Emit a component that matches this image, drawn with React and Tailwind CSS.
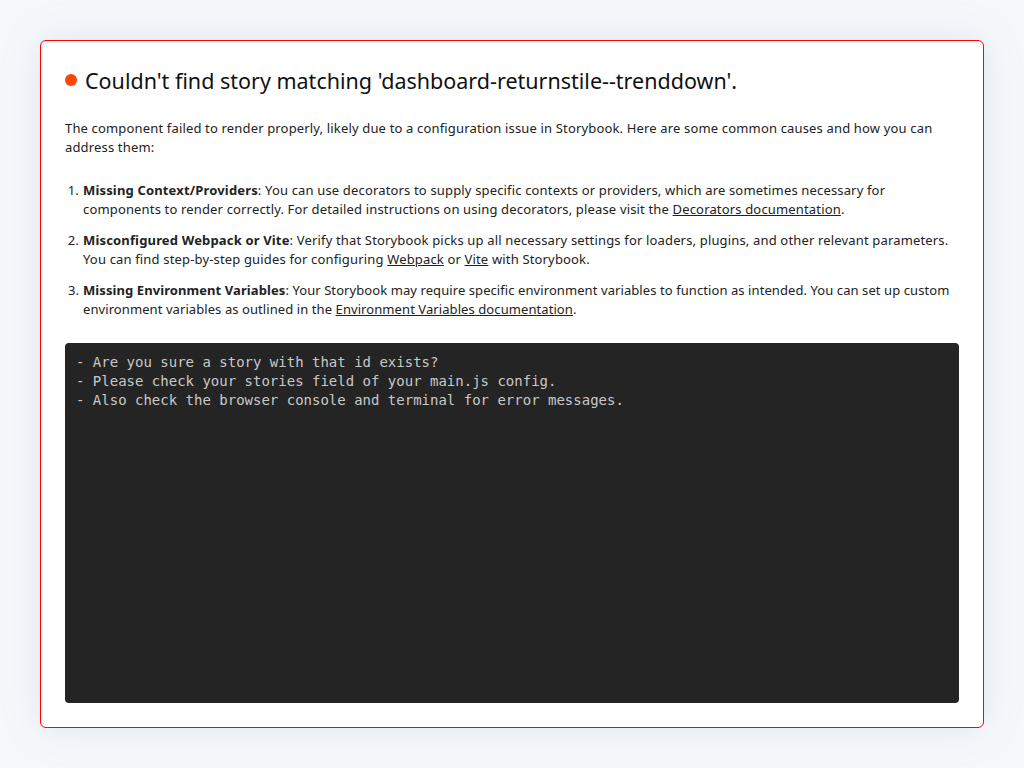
export default function App() {
  const body = { fontFamily: '"Noto Sans", "Open Sans", sans-serif' }
  return (
    <div className="h-screen w-full bg-[#f6f9fc] p-10 flex" style={body}>
      <div className="flex-1 flex flex-col gap-6 bg-white border border-[#ff0000] rounded-md p-6 shadow-[0_0_40px_rgba(120,135,155,0.18)]">
        <div className="flex items-center gap-2 h-[30px]">
          <span className="w-3 h-3 rounded-full bg-[#ff4400] shrink-0" />
          <h1 className="text-[21.5px] leading-[29px] text-[#111]">
            Couldn't find story matching 'dashboard-returnstile--trenddown'.
          </h1>
        </div>

        <p className="text-[13px] leading-[19px] tracking-[0.16px] text-[#222]">
          The component failed to render properly, likely due to a configuration issue in Storybook. Here are some common causes and how you can address them:
        </p>

        <ol className="flex flex-col gap-3 text-[13px] leading-[19px] tracking-[0.16px] text-[#222]">
          <li className="flex">
            <span className="w-[18px] shrink-0 text-right pr-[4px]">1.</span>
            <span>
              <b>Missing Context/Providers</b>: You can use decorators to supply specific contexts or providers, which are sometimes necessary for components to render correctly. For detailed instructions on using decorators, please visit the{' '}
              <a className="underline">Decorators documentation</a>.
            </span>
          </li>
          <li className="flex">
            <span className="w-[18px] shrink-0 text-right pr-[4px]">2.</span>
            <span>
              <b>Misconfigured Webpack or Vite</b>: Verify that Storybook picks up all necessary settings for loaders, plugins, and other relevant parameters. You can find step-by-step guides for configuring{' '}
              <a className="underline">Webpack</a> or <a className="underline">Vite</a> with Storybook.
            </span>
          </li>
          <li className="flex tracking-[0.08px]">
            <span className="w-[18px] shrink-0 text-right pr-[4px]">3.</span>
            <span>
              <b>Missing Environment Variables</b>: Your Storybook may require specific environment variables to function as intended. You can set up custom environment variables as outlined in the{' '}
              <a className="underline">Environment Variables documentation</a>.
            </span>
          </li>
        </ol>

        <pre
          className="flex-1 bg-[#242424] rounded text-[#c8c8c8] text-[14px] leading-[19px] px-[11px] py-[10px] m-0"
          style={{ fontFamily: '"DejaVu Sans Mono", monospace' }}
        >
{`- Are you sure a story with that id exists?
- Please check your stories field of your main.js config.
- Also check the browser console and terminal for error messages.`}
        </pre>
      </div>
    </div>
  )
}
